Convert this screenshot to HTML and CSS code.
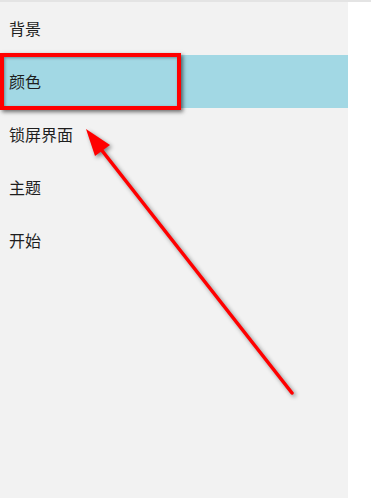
FILE: index.html
```html
<!DOCTYPE html>
<html lang="zh-CN">
<head>
	<meta charset="UTF-8">
	<title>个性化</title>
	<link rel="stylesheet" href="styles.css">
</head>
<body>
	<div class="topline"></div>
	<div class="page">
		<ul class="menu">
			<li class="item">背景</li>
			<li class="item on">颜色</li>
			<li class="item">锁屏界面</li>
			<li class="item">主题</li>
			<li class="item">开始</li>
		</ul>
		<div class="right"></div>
	</div>
	<div class="mark"></div>
	<svg class="arrow" width="371" height="498" viewBox="0 0 371 498">
		<line x1="292" y1="393" x2="100" y2="148" stroke="#ff0000" stroke-width="3.5" stroke-linecap="round"/>
		<polygon points="86,129 110,145 95,156" fill="#ff0000"/>
	</svg>
</body>
</html>
```
FILE: styles.css
```css
html,body{
	margin: 0;
	padding: 0;
	height: 100%;
}
body{
	font-family: "Noto Sans CJK SC", "Liberation Sans", sans-serif;
	background-color: #ffffff;
	position: relative;
	overflow: hidden;
}
.topline{
	height: 2px;
	background-color: #e4e4e4;
}
.page{
	display: flex;
	height: 496px;
}
.menu{
	list-style: none;
	margin: 0;
	padding: 0;
	width: 348px;
	background-color: #f2f2f2;
}
.item{
	height: 53px;
	line-height: 53px;
	padding-left: 9px;
	font-size: 16px;
	color: #1e1e1e;
}
.on{
	background-color: #a2d8e4;
}
.right{
	flex: 1;
	background-color: #ffffff;
}
.mark{
	position: absolute;
	left: 0;
	top: 53px;
	width: 173px;
	height: 49px;
	border: 4px solid #ff0000;
	box-shadow: 2px 2px 4px rgba(0,0,0,0.55), inset 1px 1px 3px rgba(0,0,0,0.35);
}
.arrow{
	position: absolute;
	left: 0;
	top: 0;
	filter: drop-shadow(2px 2px 2px rgba(0,0,0,0.45));
}
```
